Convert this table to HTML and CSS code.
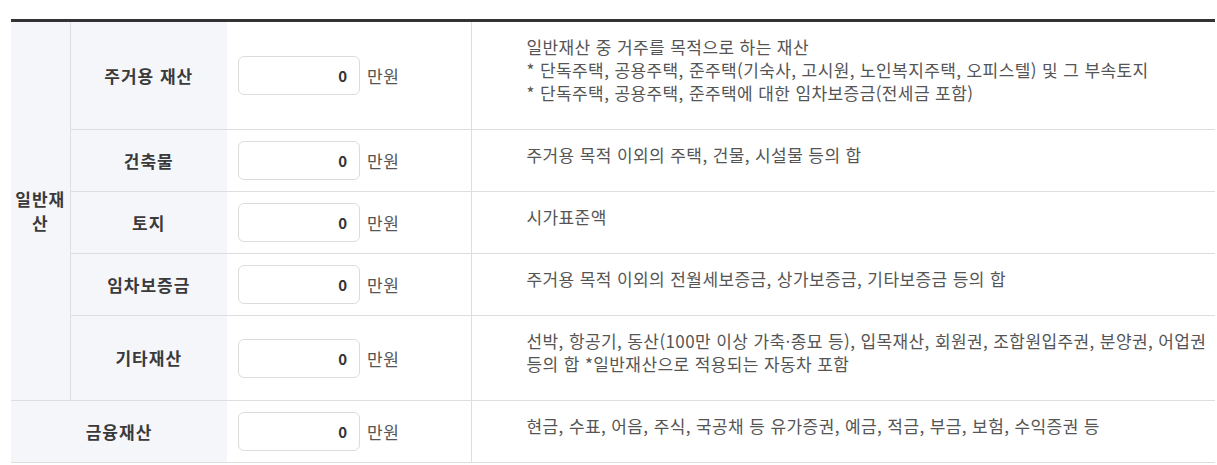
FILE: index.html
```html
<!DOCTYPE html>
<html lang="ko">
<head>
<meta charset="utf-8">
<title>재산 입력</title>
<link rel="stylesheet" href="styles.css">
</head>
<body>
<div class="wrap">
  <table class="asset-table">
    <colgroup>
      <col class="c-group">
      <col class="c-label">
      <col class="c-input">
      <col class="c-desc">
    </colgroup>
    <tbody>
      <tr>
        <th class="group" rowspan="5">일반재산</th>
        <th class="label">주거용 재산</th>
        <td class="field"><span class="box">0</span><span class="unit">만원</span></td>
        <td class="desc">일반재산 중 거주를 목적으로 하는 재산<br>* 단독주택, 공용주택, 준주택(기숙사, 고시원, 노인복지주택, 오피스텔) 및 그 부속토지<br>* 단독주택, 공용주택, 준주택에 대한 임차보증금(전세금 포함)</td>
      </tr>
      <tr>
        <th class="label">건축물</th>
        <td class="field"><span class="box">0</span><span class="unit">만원</span></td>
        <td class="desc">주거용 목적 이외의 주택, 건물, 시설물 등의 합</td>
      </tr>
      <tr>
        <th class="label">토지</th>
        <td class="field"><span class="box">0</span><span class="unit">만원</span></td>
        <td class="desc">시가표준액</td>
      </tr>
      <tr>
        <th class="label">임차보증금</th>
        <td class="field"><span class="box">0</span><span class="unit">만원</span></td>
        <td class="desc">주거용 목적 이외의 전월세보증금, 상가보증금, 기타보증금 등의 합</td>
      </tr>
      <tr>
        <th class="label">기타재산</th>
        <td class="field"><span class="box">0</span><span class="unit">만원</span></td>
        <td class="desc">선박, 항공기, 동산(100만 이상 가축·종묘 등), 입목재산, 회원권, 조합원입주권, 분양권, 어업권 등의 합 *일반재산으로 적용되는 자동차 포함</td>
      </tr>
      <tr>
        <th class="label" colspan="2">금융재산</th>
        <td class="field"><span class="box">0</span><span class="unit">만원</span></td>
        <td class="desc">현금, 수표, 어음, 주식, 국공채 등 유가증권, 예금, 적금, 부금, 보험, 수익증권 등</td>
      </tr>
    </tbody>
  </table>
</div>
</body>
</html>
```
FILE: styles.css
```css
html, body {
  margin: 0;
  padding: 0;
  background: #fff;
}
body {
  font-family: "Noto Sans CJK KR", "Noto Sans", sans-serif;
  color: #555;
}
.wrap {
  padding: 19px 2px 0 11px;
}
.asset-table {
  width: 1204px;
  border-collapse: collapse;
  table-layout: fixed;
  border-top: 3px solid #333;
}
.c-group { width: 59px; }
.c-label { width: 157px; }
.c-input { width: 244px; }

.asset-table th,
.asset-table td {
  border-bottom: 1px solid #dedede;
  padding: 0;
}
.asset-table .group,
.asset-table .label {
  background: #f5f6fa;
  color: #3a3a3a;
  font-weight: 700;
  font-size: 17px;
  letter-spacing: 1px;
  line-height: 24px;
  text-align: center;
  vertical-align: middle;
}
.asset-table .group {
  padding: 0 3px;
  border-right: 1px solid #dedede;
}
.asset-table .field {
  padding: 0 0 0 11px;
  vertical-align: middle;
  border-right: 1px solid #dedede;
  white-space: nowrap;
}
.box {
  display: inline-block;
  box-sizing: border-box;
  width: 122px;
  height: 39px;
  border: 1px solid #dcdcdc;
  border-radius: 6px;
  background: #fff;
  text-align: right;
  padding-right: 12px;
  font-size: 15px;
  font-weight: 700;
  line-height: 37px;
  color: #333;
  vertical-align: middle;
}
.unit {
  display: inline-block;
  margin-left: 7px;
  font-size: 17px;
  letter-spacing: 0.5px;
  color: #555;
  vertical-align: middle;
}
.asset-table .desc {
  padding: 13px 5px 25px 55px;
  font-size: 17px;
  letter-spacing: 0.4px;
  line-height: 23px;
  color: #555;
  vertical-align: top;
  word-break: keep-all;
}
```
